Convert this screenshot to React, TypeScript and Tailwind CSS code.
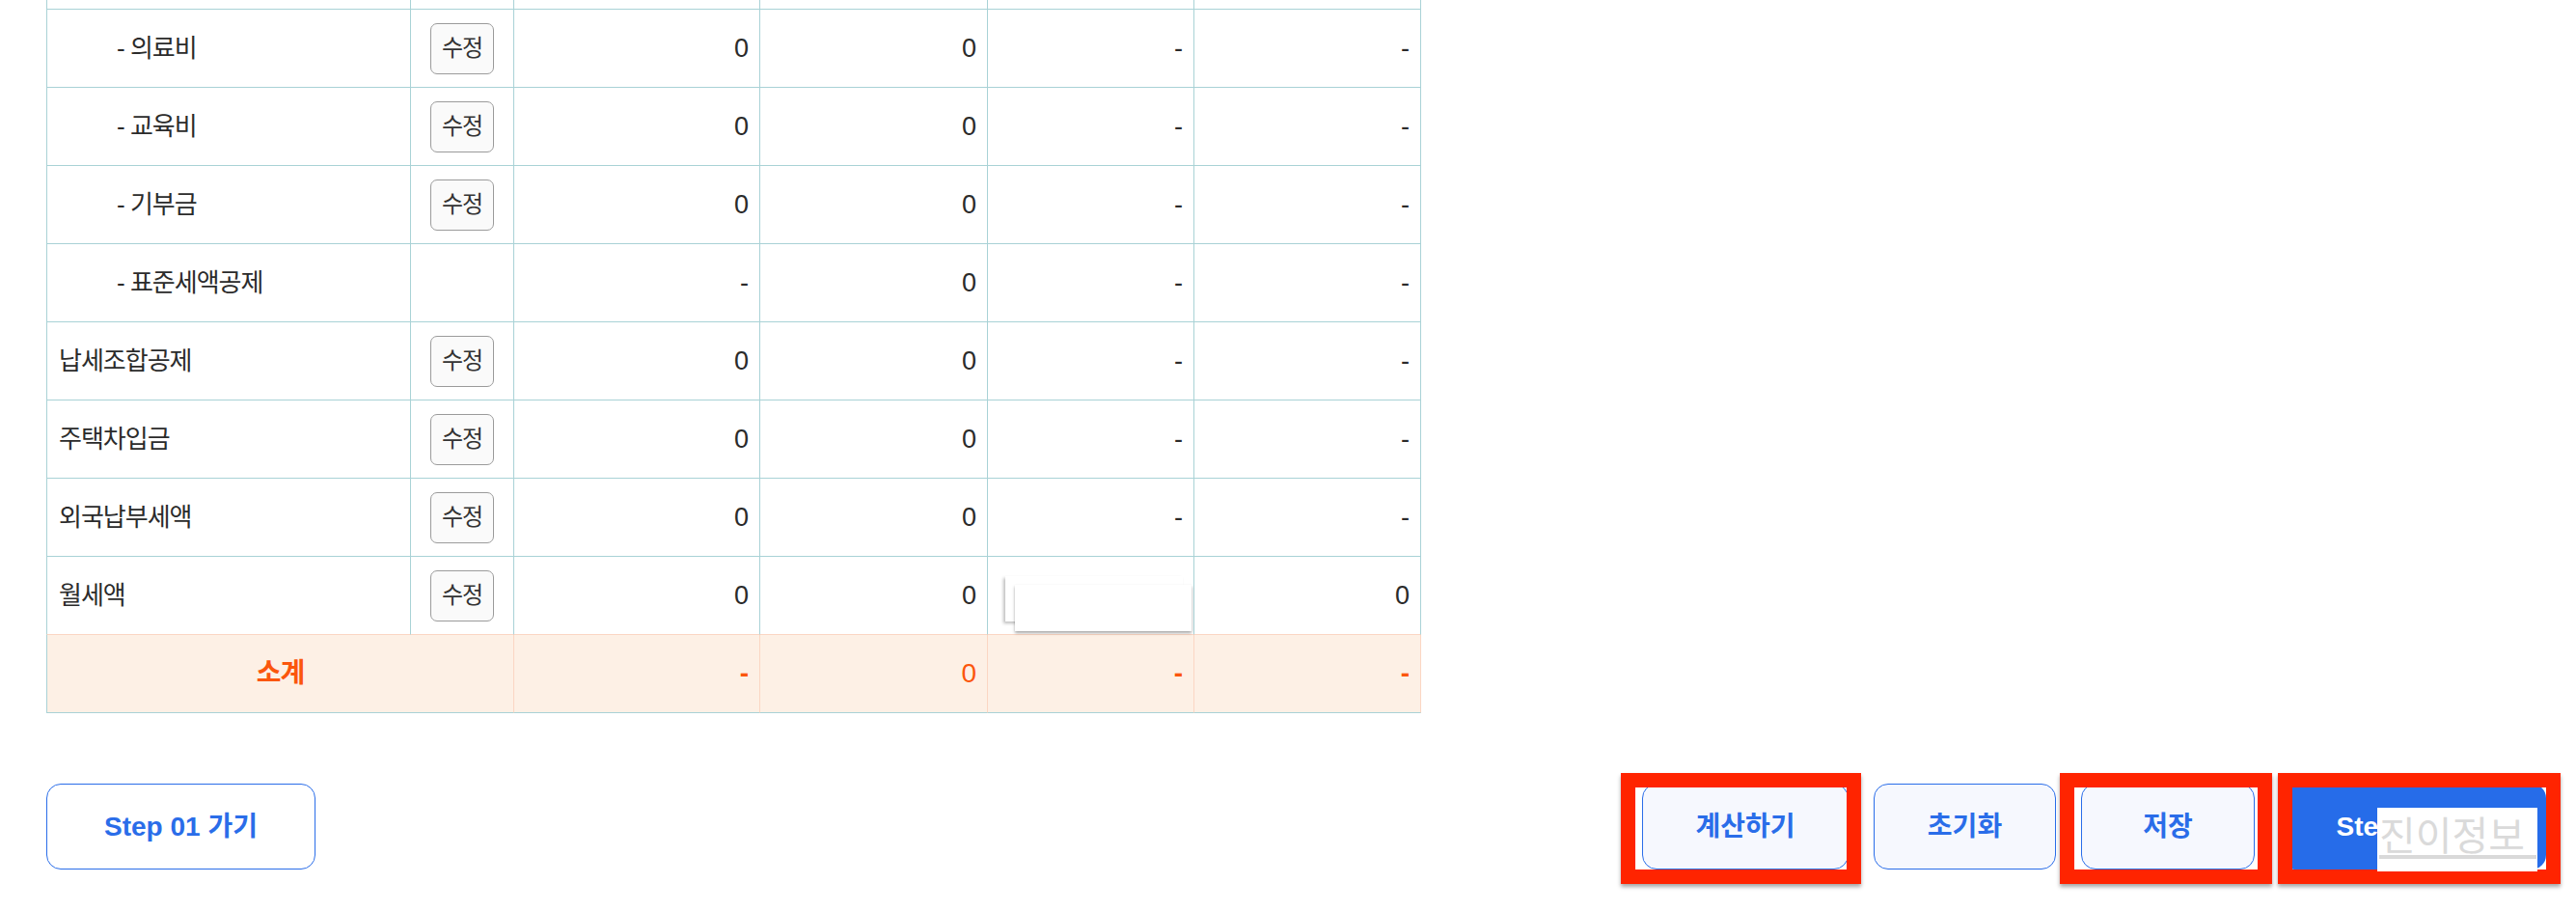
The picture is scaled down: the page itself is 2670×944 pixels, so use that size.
import React from 'react'

type Row = {
  label: string
  sub?: boolean
  edit: boolean
  vals: string[]
  popup?: boolean
}

const rows: Row[] = [
  { label: '- 의료비', sub: true, edit: true, vals: ['0', '0', '-', '-'] },
  { label: '- 교육비', sub: true, edit: true, vals: ['0', '0', '-', '-'] },
  { label: '- 기부금', sub: true, edit: true, vals: ['0', '0', '-', '-'] },
  { label: '- 표준세액공제', sub: true, edit: false, vals: ['-', '0', '-', '-'] },
  { label: '납세조합공제', edit: true, vals: ['0', '0', '-', '-'] },
  { label: '주택차입금', edit: true, vals: ['0', '0', '-', '-'] },
  { label: '외국납부세액', edit: true, vals: ['0', '0', '-', '-'] },
  { label: '월세액', edit: true, vals: ['0', '0', '', '0'], popup: true },
]

const cols = 'grid grid-cols-[378px_107px_255px_236px_214px_235px]'

function DataRow({ row, last }: { row: Row; last: boolean }) {
  const line = last ? 'border-b-[#fbd6c3]' : 'border-b-[#a9d2d6]'
  const cell = `h-[81px] border-b border-r border-r-[#a9d2d6] ${line} flex items-center`
  return (
    <div className={cols}>
      <div className={`${cell} border-l border-l-[#a9d2d6] ${row.sub ? 'pl-[72px]' : 'pl-[12px]'}`}>
        <span className="text-[26px] tracking-[-1px] text-[#2b2b2b]">{row.label}</span>
      </div>
      <div className={`${cell} justify-center`}>
        {row.edit && (
          <button className="w-[66px] h-[53px] rounded-[7px] border border-[#9b9b9b] bg-[#fafafa] text-[24px] tracking-[-1px] text-[#333]">
            수정
          </button>
        )}
      </div>
      {row.vals.map((v, i) => (
        <div key={i} className={`${cell} justify-end pr-[11px] relative`}>
          <span className="text-[27px] text-[#2b2b2b]">{v}</span>
          {row.popup && i === 2 && (
            <>
              <div className="absolute left-[18px] top-[20px] w-[184px] h-[47px] bg-white shadow-[-2px_2px_3px_rgba(0,0,0,0.25)]" />
              <div className="absolute left-[28px] top-[29px] w-[183px] h-[48px] bg-white shadow-[0_2px_3px_rgba(0,0,0,0.35)]" />
            </>
          )}
        </div>
      ))}
    </div>
  )
}

function RedFrame({ className }: { className: string }) {
  return (
    <span
      className={`absolute border-[15px] border-[#ff2400] shadow-[0_3px_4px_rgba(0,0,0,0.35)] pointer-events-none ${className}`}
    />
  )
}

export default function App() {
  const partial = 'h-[10px] border-b border-r border-[#a9d2d6]'
  const subCell = 'h-[81px] border-b border-b-[#a9d2d6] border-r border-r-[#fbd6c3] bg-[#fdf0e5] flex items-center'

  return (
    <div className="min-h-screen bg-white font-['Liberation_Sans','Noto_Sans_CJK_KR',sans-serif]">
      <div className="pl-[48px]">
        <div className="w-[1426px]">
          {/* cut-off row above */}
          <div className={cols}>
            <div className={`${partial} border-l`} />
            <div className={partial} />
            <div className={partial} />
            <div className={partial} />
            <div className={partial} />
            <div className={partial} />
          </div>

          {rows.map((r, i) => (
            <DataRow key={r.label} row={r} last={i === rows.length - 1} />
          ))}

          {/* subtotal */}
          <div className={cols}>
            <div className={`${subCell} col-span-2 justify-center border-l border-l-[#a9d2d6]`}>
              <span className="text-[28px] font-bold tracking-[-1px] text-[#fb560c]">소계</span>
            </div>
            <div className={`${subCell} justify-end pr-[11px]`}>
              <span className="text-[28px] font-bold text-[#fb560c]">-</span>
            </div>
            <div className={`${subCell} justify-end pr-[11px]`}>
              <span className="text-[28px] text-[#fb560c]">0</span>
            </div>
            <div className={`${subCell} justify-end pr-[11px]`}>
              <span className="text-[28px] font-bold text-[#fb560c]">-</span>
            </div>
            <div className={`${subCell} justify-end pr-[11px] border-r-[#a9d2d6]`}>
              <span className="text-[28px] font-bold text-[#fb560c]">-</span>
            </div>
          </div>
        </div>
      </div>

      {/* bottom actions */}
      <div className="mt-[73px] flex items-center justify-between pl-[48px] pr-[31px]">
        <button className="w-[279px] h-[89px] rounded-[15px] border border-[#2a6de9] bg-white text-[28px] font-bold text-[#2a6de9]">
          Step 01 가기
        </button>

        <div className="flex items-center gap-[26px]">
          <div className="relative">
            <button className="w-[214px] h-[89px] rounded-[15px] border border-[#2a6de9] bg-[#f6f8fe] text-[28px] font-bold text-[#2a6de9]">
              계산하기
            </button>
            <RedFrame className="left-[-22px] right-[-13px] top-[-11px] bottom-[-15px]" />
          </div>
          <button className="w-[189px] h-[89px] rounded-[15px] border border-[#2a6de9] bg-[#f6f8fe] text-[28px] font-bold text-[#2a6de9]">
            초기화
          </button>
          <div className="relative">
            <button className="w-[180px] h-[89px] rounded-[15px] border border-[#2a6de9] bg-[#f6f8fe] text-[28px] font-bold text-[#2a6de9]">
              저장
            </button>
            <RedFrame className="left-[-22px] right-[-18px] top-[-11px] bottom-[-15px]" />
          </div>
          <div className="relative">
            <button className="w-[276px] h-[89px] rounded-[15px] bg-[#266ce9] text-[28px] font-bold text-white">
              Step 03 가기
            </button>
            <RedFrame className="left-[-2px] right-[-15px] top-[-11px] bottom-[-15px]" />
            <div className="absolute left-[101px] top-[25px] w-[166px] h-[66px] bg-white overflow-hidden">
              <span className="absolute left-[2px] top-[6px] text-[41px] leading-none text-[#dadada] font-['Noto_Sans_CJK_KR',sans-serif] whitespace-nowrap">
                진이정보
              </span>
              <span className="absolute left-[2px] top-[49px] w-[163px] h-[4px] bg-[#d9d9d9]" />
            </div>
          </div>
        </div>
      </div>
    </div>
  )
}
